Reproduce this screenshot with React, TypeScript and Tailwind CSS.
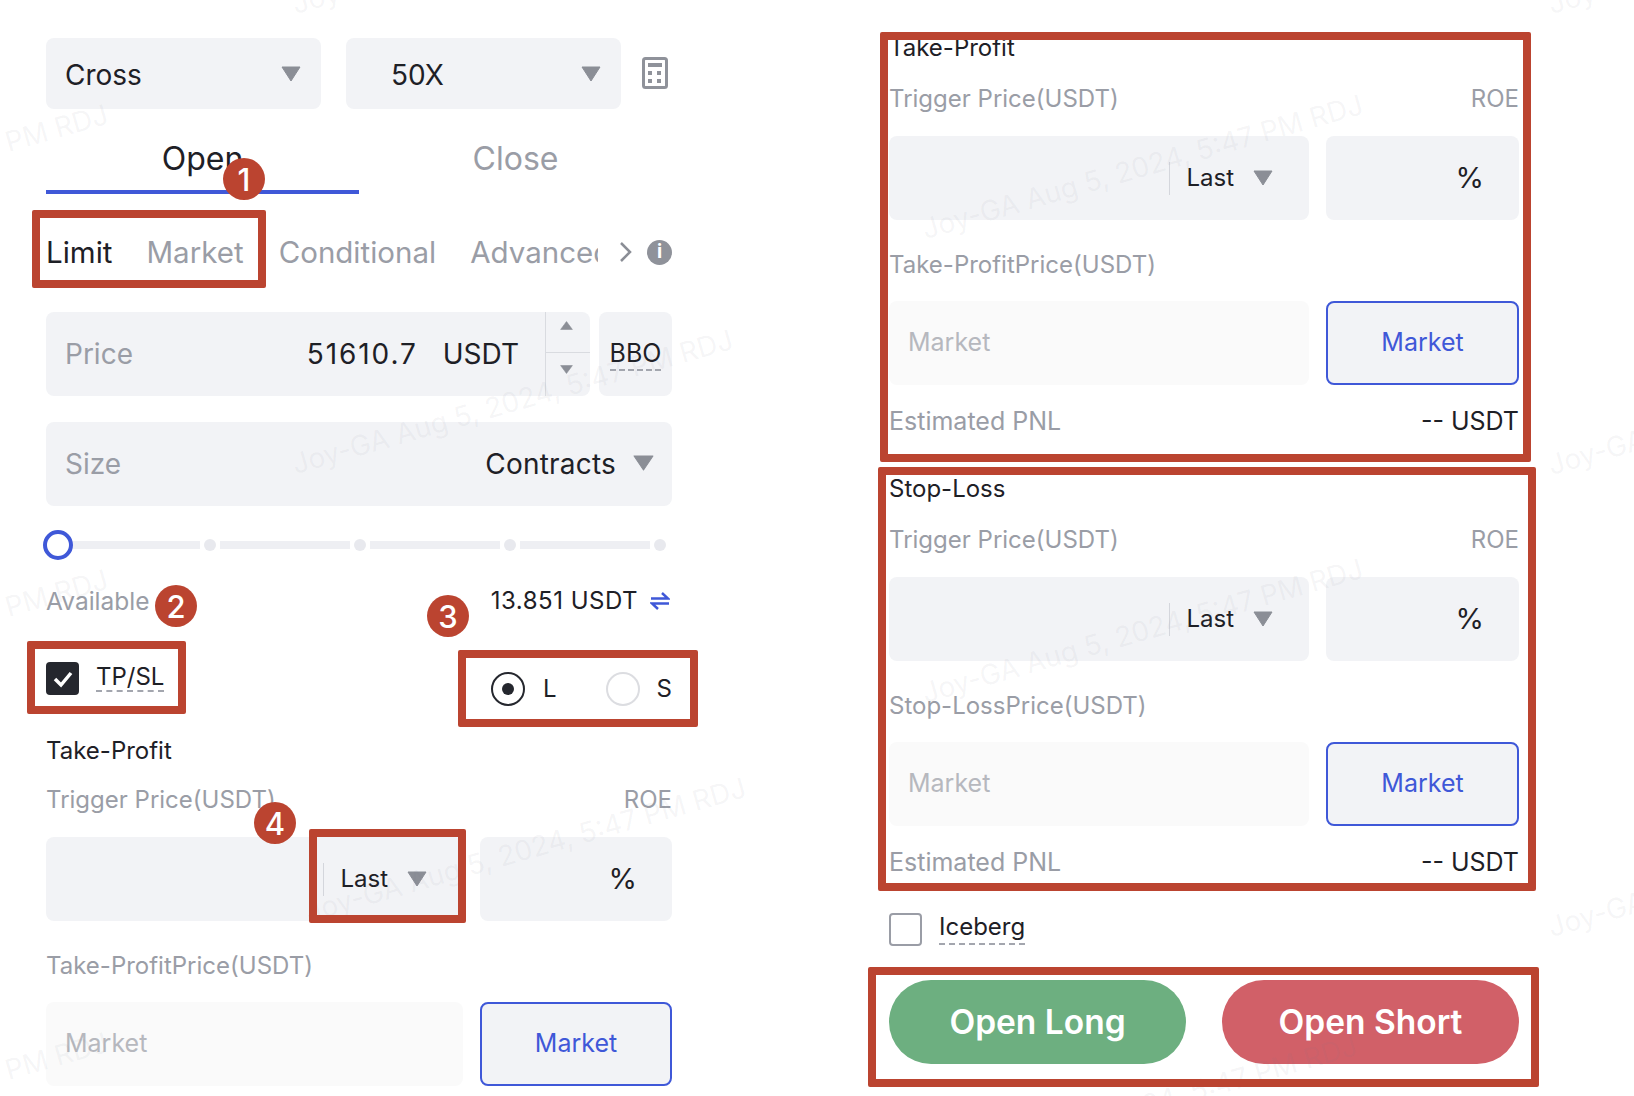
import type { ReactNode } from "react";

const WATERMARKS = [
  { text: "PM RDJ", className: "left-[10px] top-[127px]" },
  { text: "PM RDJ", className: "left-[10px] top-[592px]" },
  { text: "PM RDJ", className: "left-[10px] top-[1055px]" },
  { text: "Joy-GA Aug 5, 2024, 5:47 PM RDJ", className: "left-[297px] top-[-11px]" },
  { text: "Joy-GA Aug 5, 2024, 5:47 PM RDJ", className: "left-[297px] top-[449px]" },
  { text: "Joy-GA Aug 5, 2024, 5:47 PM RDJ", className: "left-[310px] top-[897px]" },
  { text: "Joy-GA Aug 5, 2024, 5:47 PM RDJ", className: "left-[927px] top-[214px]" },
  { text: "Joy-GA Aug 5, 2024, 5:47 PM RDJ", className: "left-[927px] top-[678px]" },
  { text: "Joy-GA Aug 5, 2024, 5:47 PM RDJ", className: "left-[921px] top-[1155px]" },
  { text: "Joy-GA Aug 5, 2024, 5:47 PM RDJ", className: "left-[1553px] top-[-11px]" },
  { text: "Joy-GA Aug 5, 2024, 5:47 PM RDJ", className: "left-[1553px] top-[450px]" },
  { text: "Joy-GA Aug 5, 2024, 5:47 PM RDJ", className: "left-[1553px] top-[912px]" },
];

function Caret({ className = "w-[20px] h-[16px]" }: { className?: string }) {
  return (
    <svg viewBox="0 0 20 16" className={`${className} shrink-0`} preserveAspectRatio="none">
      <path d="M1 1 H19 L10 15 Z" fill="#8b8e96" stroke="#8b8e96" strokeLinejoin="round" />
    </svg>
  );
}

function Badge({ n, className }: { n: number; className: string }) {
  return (
    <div
      className={`absolute z-20 flex h-[42px] w-[42px] items-center justify-center rounded-full bg-[#bb4430] text-[31px] font-medium leading-none text-white ${className}`}
    >
      {n}
    </div>
  );
}

function RedBox({ className }: { className: string }) {
  return <div className={`absolute z-10 rounded-[2px] border-[8px] border-[#bb4430] ${className}`} />;
}

function Dashed({ children, className = "pb-[4px]" }: { children: ReactNode; className?: string }) {
  return (
    <span className={`inline-block border-b-2 border-dashed border-[#a3a6ae] leading-[24px] ${className}`}>
      {children}
    </span>
  );
}

function Select({ label, className }: { label: string; className: string }) {
  return (
    <div className="flex h-[71px] w-[275px] items-center rounded-[8px] bg-[#f2f3f6] pr-[20px]">
      <span className={`flex-1 pt-[3px] text-[28px] text-[#1e2026] ${className}`}>{label}</span>
      <Caret />
    </div>
  );
}

function TpBlock({
  title,
  priceLabel,
  pnl,
  narrow,
}: {
  title: string;
  priceLabel: string;
  pnl?: boolean;
  narrow?: boolean;
}) {
  const side = narrow ? "w-[192px]" : "w-[193px]";
  return (
    <div className="text-[24px]">
      <div className={narrow ? "h-[34px] pt-[2px] leading-8 text-[#1e2026]" : "h-8 leading-8 text-[#1e2026]"}>
        {title}
      </div>
      <div className={`flex h-8 justify-between leading-8 text-[#9a9da6] ${narrow ? "mt-[17px]" : "mt-[19px]"}`}>
        <span>Trigger Price(USDT)</span>
        <span>ROE</span>
      </div>
      <div className="mt-[21px] flex h-[84px] gap-[17px]">
        <div className="flex flex-1 items-center justify-end rounded-[8px] bg-[#f2f3f6] pr-[36px]">
          <div className="mr-[16px] h-[33px] w-[1px] bg-[#d4d6dc]" />
          <span className="mr-[19px] text-[#1e2026]">Last</span>
          <Caret />
        </div>
        <div
          className={`flex items-center justify-end rounded-[8px] bg-[#f2f3f6] pr-[35px] text-[29px] text-[#1e2026] ${side}`}
        >
          %
        </div>
      </div>
      <div className="mt-[29px] h-8 leading-8 text-[#9a9da6]">{priceLabel}</div>
      <div className="mt-[20px] flex h-[84px] gap-[17px] text-[25px]">
        <div className="flex flex-1 items-center rounded-[8px] bg-[#fafafa] pl-[19px] text-[#b6b8be]">Market</div>
        <div
          className={`flex items-center justify-center rounded-[8px] border-2 border-[#3f58d8] bg-[#f2f3f6] text-[#3f58d8] ${side}`}
        >
          Market
        </div>
      </div>
      {pnl && (
        <div className="mt-[20px] flex h-8 justify-between text-[25px] leading-8">
          <span className="text-[#9a9da6]">Estimated PNL</span>
          <span className="text-[#1e2026]">-- USDT</span>
        </div>
      )}
    </div>
  );
}

function LeftPanel() {
  return (
    <div className="relative w-[626px] shrink-0 pt-[38px]">
      <div className="flex items-center gap-[25px]">
        <Select label="Cross" className="pl-[19px]" />
        <Select label="50X" className="pl-[45px]" />
        <svg viewBox="0 0 26 32" className="ml-[-4px] mt-[-2px] h-[32px] w-[26px] shrink-0">
          <rect x="1.5" y="1.5" width="23" height="29" rx="2" fill="#fff" stroke="#8f929a" strokeWidth="3" />
          <rect x="6" y="6" width="14" height="4" fill="#8f929a" />
          <rect x="6" y="14" width="4" height="4" fill="#8f929a" />
          <rect x="15" y="14" width="4" height="4" fill="#8f929a" />
          <rect x="6" y="22" width="4" height="4" fill="#8f929a" />
          <rect x="15" y="22" width="4" height="4" fill="#8f929a" />
        </svg>
      </div>

      <div className="mt-[21px] flex text-[32px]">
        <div className="flex h-[64px] w-[313px] items-center justify-center border-b-4 border-[#3f58d8] pb-[2px] text-[#1e2026]">
          Open
        </div>
        <div className="flex h-[64px] w-[313px] items-center justify-center pb-[6px] text-[#9a9da6]">Close</div>
      </div>

      <div className="relative mt-[42px] flex h-8 items-center text-[29.5px] text-[#9a9da6]">
        <span className="text-[#1e2026]">Limit</span>
        <span className="ml-[34px]">Market</span>
        <span className="ml-[35px]">Conditional</span>
        <span className="ml-[34px] w-[128px] overflow-hidden whitespace-nowrap">Advanced</span>
        <svg viewBox="0 0 14 22" className="ml-[21px] h-[22px] w-[14px] shrink-0">
          <path d="M2 2 L11 11 L2 20" fill="none" stroke="#8b8e96" strokeWidth="2.5" />
        </svg>
        <div className="ml-[14px] flex h-[25px] w-[25px] shrink-0 items-center justify-center rounded-full bg-[#8f929a] text-[19px] font-bold text-white">
          i
        </div>
        <RedBox className="left-[-14px] top-[-26px] h-[78px] w-[234px]" />
      </div>

      <div className="mt-[44px] flex gap-[9px]">
        <div className="flex h-[84px] flex-1 items-center rounded-[8px] bg-[#f2f3f6] pl-[19px] text-[28px]">
          <span className="flex-1 text-[#9a9da6]">Price</span>
          <span className="tracking-[1.9px] text-[#1e2026]">51610.7</span>
          <span className="ml-[25px] text-[#1e2026]">USDT</span>
          <div className="ml-[26px] flex h-full w-[45px] flex-col border-l border-[#d9dbe0]">
            <div className="flex flex-1 items-start justify-center border-b border-[#d9dbe0] pr-[4px] pt-[9px]">
              <Caret className="h-[9px] w-[13px] rotate-180" />
            </div>
            <div className="flex flex-1 items-start justify-center pr-[4px] pt-[12px]">
              <Caret className="h-[9px] w-[13px]" />
            </div>
          </div>
        </div>
        <div className="flex h-[84px] w-[73px] items-center justify-center rounded-[8px] bg-[#f2f3f6] pt-[4px] text-[25px] text-[#1e2026]">
          <Dashed>BBO</Dashed>
        </div>
      </div>

      <div className="mt-[26px] flex h-[84px] items-center rounded-[8px] bg-[#f2f3f6] pl-[19px] pr-[18px] text-[28px]">
        <span className="flex-1 text-[#9a9da6]">Size</span>
        <span className="tracking-[0.2px] text-[#1e2026]">Contracts</span>
        <Caret className="ml-[17px] mt-[-2px] h-[16px] w-[21px]" />
      </div>

      <div className="mt-[24px] flex h-[30px] items-center">
        <div className="ml-[-3px] h-[30px] w-[30px] shrink-0 rounded-full border-4 border-[#3f58d8] bg-white" />
        <div className="h-[8px] w-[127px] bg-[#eeeff3]" />
        <div className="ml-[4px] h-[12px] w-[12px] rounded-full bg-[#e8e9ee]" />
        <div className="ml-[4px] h-[8px] w-[130px] bg-[#eeeff3]" />
        <div className="ml-[4px] h-[12px] w-[12px] rounded-full bg-[#e8e9ee]" />
        <div className="ml-[4px] h-[8px] w-[130px] bg-[#eeeff3]" />
        <div className="ml-[4px] h-[12px] w-[12px] rounded-full bg-[#e8e9ee]" />
        <div className="ml-[4px] h-[8px] w-[130px] bg-[#eeeff3]" />
        <div className="ml-[4px] h-[12px] w-[12px] rounded-full bg-[#e8e9ee]" />
      </div>

      <div className="mt-[25px] flex h-8 items-center justify-between text-[24.5px] leading-8">
        <span className="text-[#9a9da6]">Available</span>
        <span className="flex items-center text-[24px] tracking-[0.5px] text-[#1e2026]">
          13.851 USDT
          <svg viewBox="0 0 20 18" className="ml-[12px] mr-[2px] h-[18px] w-[20px]">
            <path d="M1 6.5 H18 L12 1 M19 11.5 H2 L8 17" fill="none" stroke="#3f58d8" strokeWidth="2.5" />
          </svg>
        </span>
      </div>

      <div className="mt-[45px] flex h-[71px] items-start justify-between text-[24px]">
        <div className="relative flex h-[33px] items-center">
          <div className="flex h-[33px] w-[33px] items-center justify-center rounded-[4px] bg-[#25272e]">
            <svg viewBox="0 0 20 18" className="h-[18px] w-[20px]">
              <path d="M2 9 L8 15 L18 3" fill="none" stroke="#fff" strokeWidth="3.5" />
            </svg>
          </div>
          <span className="ml-[17px] flex items-center text-[#1e2026]">
            <Dashed className="pb-[1px]">TP/SL</Dashed>
          </span>
          <RedBox className="left-[-19px] top-[-21px] h-[73px] w-[159px]" />
        </div>
        <div className="relative mt-[9px] flex w-[181px] items-center">
          <div className="flex h-[34px] w-[34px] items-center justify-center rounded-full border-2 border-[#25272e]">
            <div className="h-[12px] w-[12px] rounded-full bg-[#25272e]" />
          </div>
          <span className="ml-[18px] flex-1 text-[#1e2026]">L</span>
          <div className="h-[34px] w-[34px] rounded-full border-2 border-[#dcdde1]" />
          <span className="ml-[17px] text-[#1e2026]">S</span>
          <RedBox className="left-[-33px] top-[-21px] h-[77px] w-[240px]" />
        </div>
      </div>

      <TpBlock title="Take-Profit" priceLabel="Take-ProfitPrice(USDT)" narrow />

      <RedBox className="left-[263px] top-[829px] h-[94px] w-[157px]" />
      <Badge n={1} className="left-[177px] top-[158px]" />
      <Badge n={2} className="left-[109px] top-[585px]" />
      <Badge n={3} className="left-[381px] top-[595px]" />
      <Badge n={4} className="left-[208px] top-[802px]" />
    </div>
  );
}

function RightPanel() {
  return (
    <div className="ml-[217px] w-[630px] shrink-0 pt-[32px]">
      <div className="relative">
        <TpBlock title="Take-Profit" priceLabel="Take-ProfitPrice(USDT)" pnl />
        <RedBox className="left-[-9px] top-0 h-[430px] w-[651px]" />
      </div>
      <div className="relative mt-[36px]">
        <TpBlock title="Stop-Loss" priceLabel="Stop-LossPrice(USDT)" pnl />
        <RedBox className="left-[-11px] top-[-6px] h-[424px] w-[658px]" />
      </div>
      <div className="mt-[35px] flex h-[33px] items-center text-[24px] text-[#1e2026]">
        <div className="h-[33px] w-[33px] rounded-[4px] border-2 border-[#9a9da6]" />
        <span className="ml-[17px] flex items-center">
          <Dashed>Iceberg</Dashed>
        </span>
      </div>
      <div className="relative mt-[34px] flex justify-between">
        <div className="flex h-[84px] w-[297px] items-center justify-center rounded-full bg-[#6daf80] text-[33.5px] font-semibold text-white">
          Open Long
        </div>
        <div className="flex h-[84px] w-[297px] items-center justify-center rounded-full bg-[#d16068] text-[33.5px] font-semibold text-white">
          Open Short
        </div>
        <RedBox className="left-[-21px] top-[-13px] h-[120px] w-[671px]" />
      </div>
    </div>
  );
}

export default function App() {
  return (
    <div className="relative flex h-[1096px] w-[1634px] items-start overflow-hidden bg-white pl-[46px] font-['Inter',sans-serif]">
      <LeftPanel />
      <RightPanel />
      {WATERMARKS.map((w, i) => (
        <div
          key={i}
          className={`pointer-events-none absolute origin-bottom-left rotate-[-16deg] whitespace-nowrap text-[28px] leading-[30px] text-[#787d8c]/[0.07] ${w.className}`}
        >
          {w.text}
        </div>
      ))}
    </div>
  );
}
